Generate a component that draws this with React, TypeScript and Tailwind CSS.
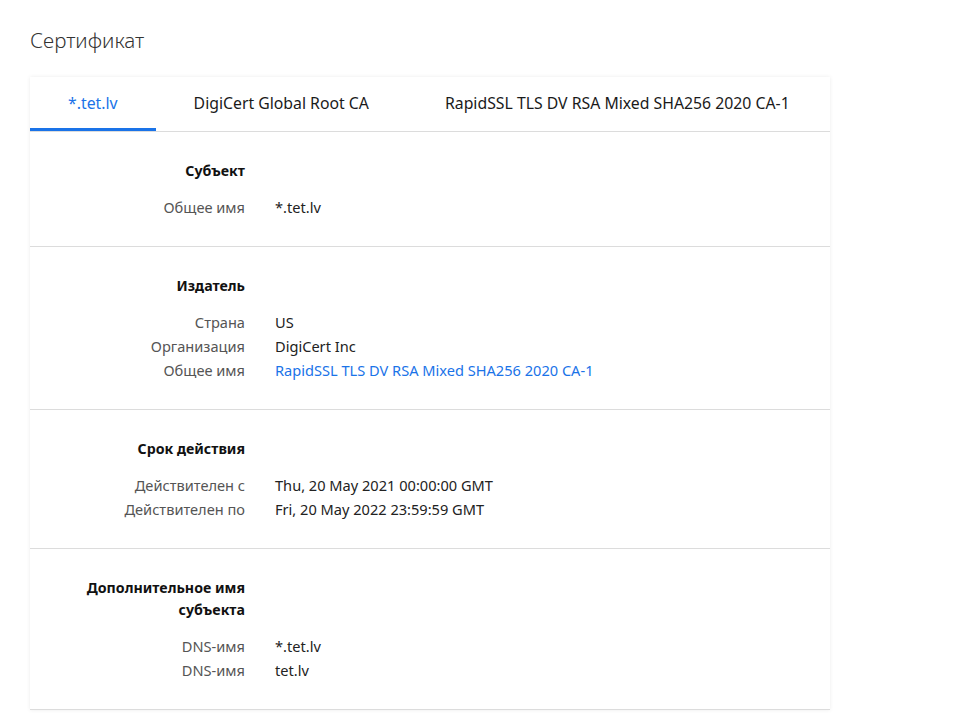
import React from "react";

type Row = { label: string; value: string; link?: boolean };
type Section = { title: string[]; rows: Row[] };

const sections: Section[] = [
  { title: ["Субъект"], rows: [{ label: "Общее имя", value: "*.tet.lv" }] },
  {
    title: ["Издатель"],
    rows: [
      { label: "Страна", value: "US" },
      { label: "Организация", value: "DigiCert Inc" },
      { label: "Общее имя", value: "RapidSSL TLS DV RSA Mixed SHA256 2020 CA-1", link: true },
    ],
  },
  {
    title: ["Срок действия"],
    rows: [
      { label: "Действителен с", value: "Thu, 20 May 2021 00:00:00 GMT" },
      { label: "Действителен по", value: "Fri, 20 May 2022 23:59:59 GMT" },
    ],
  },
  {
    title: ["Дополнительное имя", "субъекта"],
    rows: [
      { label: "DNS-имя", value: "*.tet.lv" },
      { label: "DNS-имя", value: "tet.lv" },
    ],
  },
];

const tabs = ["*.tet.lv", "DigiCert Global Root CA", "RapidSSL TLS DV RSA Mixed SHA256 2020 CA-1"];

export default function App() {
  return (
    <div
      className="min-h-screen bg-white pl-[30px] pt-[25px]"
      style={{ fontFamily: '"Noto Sans", "Open Sans", sans-serif' }}
    >
      <h1 className="text-[20.6px] font-light leading-[30px] text-[#333]">Сертификат</h1>
      <div className="mt-[22px] w-[800px] bg-white shadow-[0_0_4px_rgba(0,0,0,0.08)]">
        <div className="flex border-b border-[#dcdcdc] overflow-hidden">
          {tabs.map((t, i) => (
            <div
              key={t}
              className={
                i === 0
                  ? "relative h-[54px] shrink-0 whitespace-nowrap px-[38px] flex items-center text-[15.8px] text-[#1a73e8]"
                  : "relative h-[54px] shrink-0 whitespace-nowrap px-[38px] flex items-center text-[15.8px] text-[#1a1a1a]"
              }
            >
              {t}
              {i === 0 && <div className="absolute left-0 right-0 bottom-0 h-[3px] bg-[#1a73e8]" />}
            </div>
          ))}
        </div>
        {sections.map((s, si) => (
          <div key={si} className="border-b border-[#dcdcdc] pt-[28px] pb-[26px]">
            <div className="flex">
              <div className="w-[215px] text-right text-[14.2px] font-bold leading-[22px] text-[#111]">
                {s.title.map((l) => (
                  <div key={l}>{l}</div>
                ))}
              </div>
            </div>
            <div className="mt-[14px]">
              {s.rows.map((r, ri) => (
                <div key={ri} className="flex h-[24px] items-center text-[14.6px]">
                  <div className="w-[215px] text-right text-[#555]">{r.label}</div>
                  <div className={r.link ? "ml-[30px] text-[#1a73e8]" : "ml-[30px] text-[#222]"}>{r.value}</div>
                </div>
              ))}
            </div>
          </div>
        ))}
      </div>
    </div>
  );
}
